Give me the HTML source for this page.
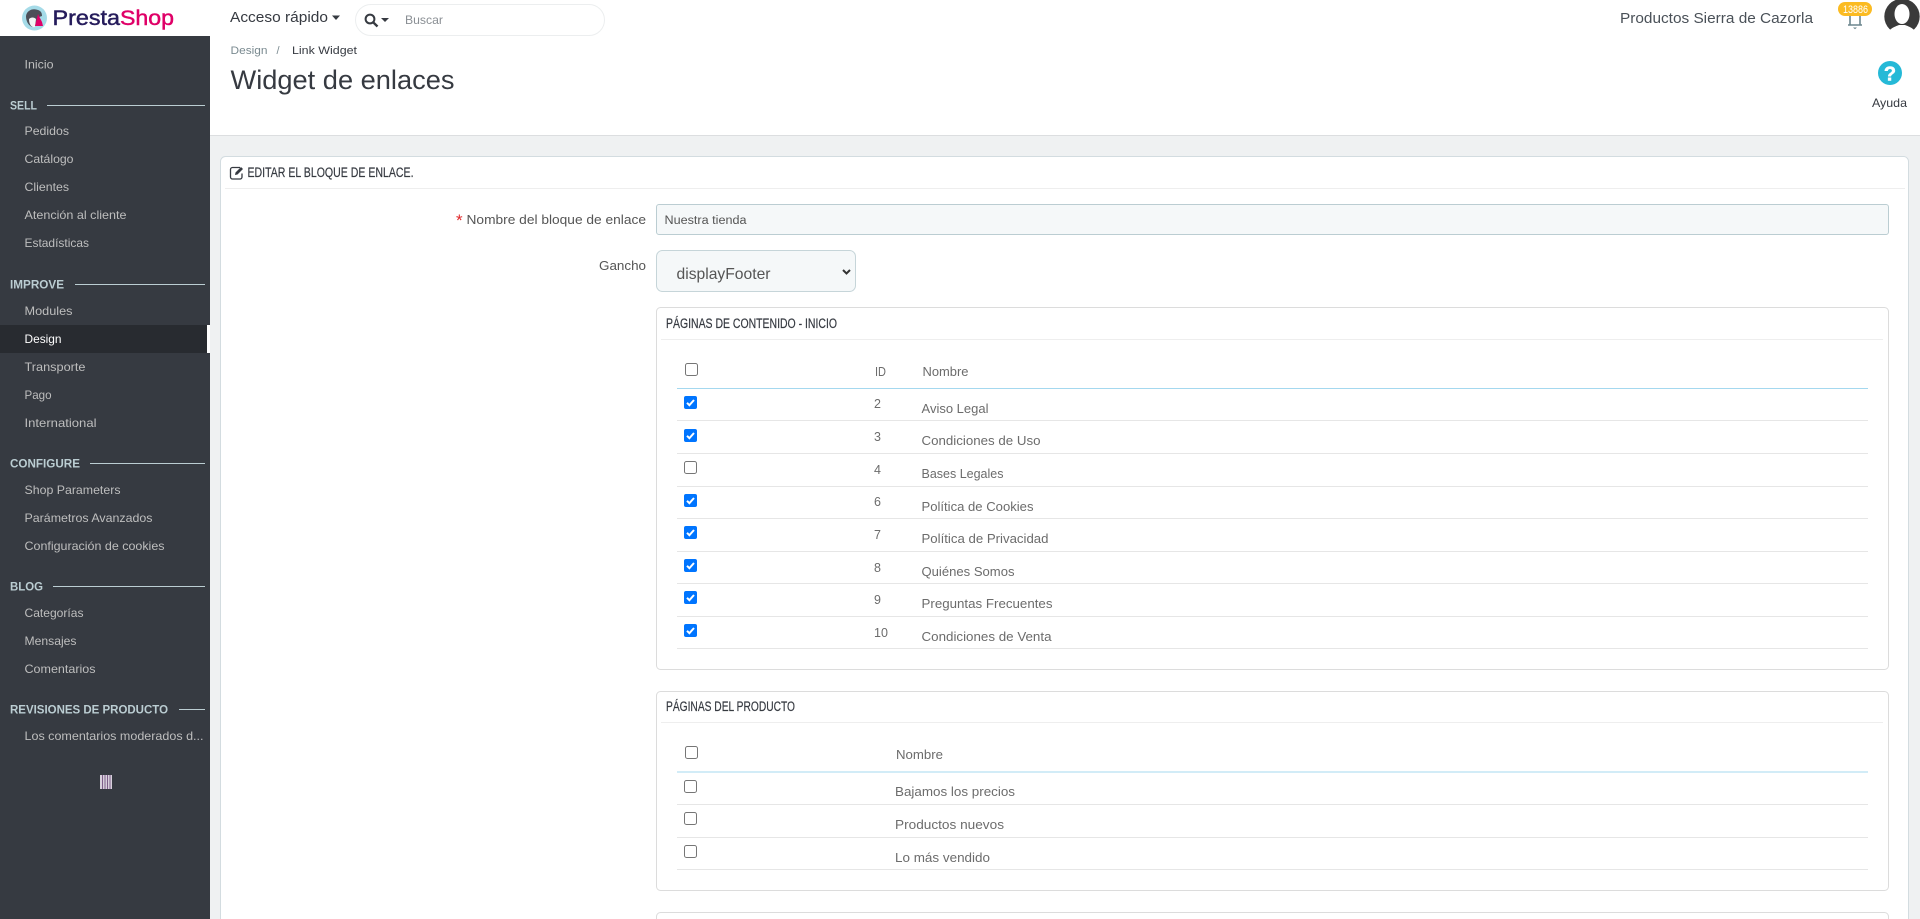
<!DOCTYPE html>
<html lang="es"><head><meta charset="utf-8"><title>Widget de enlaces</title>
<style>
html,body{margin:0;padding:0;background:#fff;overflow:hidden}
svg{display:block}
text{font-family:"Liberation Sans",sans-serif;white-space:pre}
.s{font-size:12px;fill:#bebebe}
.h{font-size:12px;font-weight:bold;fill:#bbcdd2}
.t{font-size:12.5px;fill:#6c6c6c}
.c{font-size:13.5px;fill:#363a41;stroke:#363a41;stroke-width:.2}
</style></head><body>
<svg xmlns="http://www.w3.org/2000/svg" width="1920" height="919" viewBox="0 0 1920 919">
<defs>
<g id="off"><rect x=".5" y=".5" width="12" height="12" rx="2" fill="#fff" stroke="#767676"/></g>
<g id="on"><rect width="13" height="13" rx="2" fill="#0075ff"/><path d="M3 6.800 5.400 9.200 10 4" fill="none" stroke="#fff" stroke-width="2"/></g>
</defs>
<rect width="1920" height="919" fill="#eff1f2"/>
<!-- header -->
<rect width="1920" height="135" fill="#fff"/>
<rect x="210" y="135" width="1710" height="1" fill="#dcdee0"/>
<!-- logo -->
<circle cx="34.500" cy="18" r="12.500" fill="#a5dbe8"/>
<path d="M26 16c1-6 7-8 12-6 3 1 4 3 4 6l-3 1-1 8-6 2c-4-2-6-6-6-11z" fill="#4d4f58"/>
<path d="M29 19c2-2 5-2 7 0l-1 8c-3 1-6-2-6-8z" fill="#f2f4f5"/>
<path d="M38 14l4 8 1 4h-8z" fill="#df0067"/>
<text x="52.500" y="25" font-size="21" fill="#251b5b" stroke="#251b5b" stroke-width=".45" textLength="67.500" lengthAdjust="spacingAndGlyphs">Presta</text>
<text x="120" y="25" font-size="21" fill="#df0067" stroke="#df0067" stroke-width=".45" textLength="54" lengthAdjust="spacingAndGlyphs">Shop</text>
<!-- quick access -->
<text x="230" y="22" font-size="14.500" fill="#363a41" textLength="98" lengthAdjust="spacingAndGlyphs">Acceso rápido</text>
<path d="M332 15.500h8l-4 4.500z" fill="#363a41"/>
<rect x="355.500" y="4.500" width="249" height="31" rx="15.500" fill="#fff" stroke="#eceeef"/>
<circle cx="370" cy="19" r="4.400" fill="none" stroke="#363a41" stroke-width="2"/>
<path d="M373.200 22.300 377.500 26.500" stroke="#363a41" stroke-width="2.400"/>
<path d="M381 18h8l-4 4z" fill="#363a41"/>
<text x="405" y="24" font-size="12" fill="#8a8f94" textLength="38" lengthAdjust="spacingAndGlyphs">Buscar</text>
<!-- top right -->
<text x="1620" y="23" font-size="15" fill="#4a5158" textLength="193" lengthAdjust="spacingAndGlyphs">Productos Sierra de Cazorla</text>
<path d="M1850 14v10.500M1860 14v10.500M1848 25h14" fill="none" stroke="#6c868e" stroke-width="1.600"/>
<path d="M1853 27.500h4l-2 1.800z" fill="#6c868e"/>
<rect x="1838" y="2" width="34" height="14" rx="7" fill="#fbbb22"/>
<text x="1843" y="13" font-size="11" fill="#fff" textLength="25" lengthAdjust="spacingAndGlyphs">13886</text>
<circle cx="1902" cy="16.500" r="17.700" fill="#3a3a3a"/>
<ellipse cx="1902" cy="14" rx="7.500" ry="10" fill="#fff"/>
<path d="M1887 36c1-7 7-9 12-11h6c5 2 11 4 12 11z" fill="#fff"/>
<rect x="1884" y="33" width="36" height="4" fill="#fff"/>
<circle cx="1890" cy="73" r="12" fill="#25b9d7"/>
<text x="1890" y="80.500" font-size="20" font-weight="bold" fill="#fff" stroke="#fff" stroke-width=".5" text-anchor="middle">?</text>
<text x="1872" y="107" font-size="12" fill="#363a41" textLength="35" lengthAdjust="spacingAndGlyphs">Ayuda</text>
<!-- breadcrumb & title -->
<text x="230.500" y="54" font-size="11" fill="#7a8a90" textLength="37" lengthAdjust="spacingAndGlyphs">Design</text>
<text x="276.500" y="54" font-size="11" fill="#7a8a90">/</text>
<text x="292" y="54" font-size="11" fill="#363a41" textLength="65" lengthAdjust="spacingAndGlyphs">Link Widget</text>
<text x="230.500" y="89" font-size="27" fill="#363a41" textLength="224" lengthAdjust="spacingAndGlyphs">Widget de enlaces</text>
<!-- sidebar -->
<rect y="36" width="210" height="883" fill="#363a41"/>
<rect y="325" width="210" height="28" fill="#282b30"/>
<rect x="207" y="325" width="3" height="28" fill="#fff"/>
<g class="s">
<text class="s" x="24.500" y="68.500" textLength="29" lengthAdjust="spacingAndGlyphs">Inicio</text>
<text class="s" x="24.500" y="135" textLength="44.500" lengthAdjust="spacingAndGlyphs">Pedidos</text>
<text class="s" x="24.500" y="163" textLength="49" lengthAdjust="spacingAndGlyphs">Catálogo</text>
<text class="s" x="24.500" y="191" textLength="44.500" lengthAdjust="spacingAndGlyphs">Clientes</text>
<text class="s" x="24.500" y="219" textLength="102" lengthAdjust="spacingAndGlyphs">Atención al cliente</text>
<text class="s" x="24.500" y="247" textLength="64.500" lengthAdjust="spacingAndGlyphs">Estadísticas</text>
<text class="s" x="24.500" y="315" textLength="48" lengthAdjust="spacingAndGlyphs">Modules</text>
<text class="s" x="24.500" y="343" textLength="37" lengthAdjust="spacingAndGlyphs" style="fill:#fff">Design</text>
<text class="s" x="24.500" y="371" textLength="61" lengthAdjust="spacingAndGlyphs">Transporte</text>
<text class="s" x="24.500" y="399" textLength="27" lengthAdjust="spacingAndGlyphs">Pago</text>
<text class="s" x="24.500" y="427" textLength="72" lengthAdjust="spacingAndGlyphs">International</text>
<text class="s" x="24.500" y="494" textLength="96" lengthAdjust="spacingAndGlyphs">Shop Parameters</text>
<text class="s" x="24.500" y="522" textLength="128" lengthAdjust="spacingAndGlyphs">Parámetros Avanzados</text>
<text class="s" x="24.500" y="550" textLength="140" lengthAdjust="spacingAndGlyphs">Configuración de cookies</text>
<text class="s" x="24.500" y="617" textLength="59" lengthAdjust="spacingAndGlyphs">Categorías</text>
<text class="s" x="24.500" y="645" textLength="52" lengthAdjust="spacingAndGlyphs">Mensajes</text>
<text class="s" x="24.500" y="673" textLength="71" lengthAdjust="spacingAndGlyphs">Comentarios</text>
<text class="s" x="24.500" y="740" textLength="179" lengthAdjust="spacingAndGlyphs">Los comentarios moderados d...</text>
</g>
<text class="h" x="10" y="109.500" textLength="27" lengthAdjust="spacingAndGlyphs">SELL</text>
<text class="h" x="10" y="288.500" textLength="54" lengthAdjust="spacingAndGlyphs">IMPROVE</text>
<text class="h" x="10" y="467.500" textLength="70" lengthAdjust="spacingAndGlyphs">CONFIGURE</text>
<text class="h" x="10" y="590.500" textLength="33" lengthAdjust="spacingAndGlyphs">BLOG</text>
<text class="h" x="10" y="713.500" textLength="158" lengthAdjust="spacingAndGlyphs">REVISIONES DE PRODUCTO</text>
<g fill="#bbcdd2">
<rect x="47" y="105" width="158" height="1"/>
<rect x="75" y="284" width="130" height="1"/>
<rect x="90" y="463" width="115" height="1"/>
<rect x="53" y="586" width="152" height="1"/>
<rect x="179" y="709" width="26" height="1"/>
</g>
<g>
<rect x="100" y="775" width="12" height="14" fill="#d8d0dc"/>
<rect x="102" y="775" width="1" height="14" fill="#7d5f88"/>
<rect x="104.500" y="775" width="1" height="14" fill="#7d5f88"/>
<rect x="107" y="775" width="1" height="14" fill="#7d5f88"/>
<rect x="109.500" y="775" width="1" height="14" fill="#7d5f88"/>
</g>
<!-- main card -->
<rect x="220.500" y="156.500" width="1688" height="790" rx="5" fill="#fff" stroke="#d3dce0"/>
<g fill="none" stroke="#363a41" stroke-width="1.300">
<path d="M240 167.500h-7.500a2 2 0 0 0-2 2v7.500a2 2 0 0 0 2 2h7.500a2 2 0 0 0 2-2v-3.500"/>
</g>
<path d="M235.500 172.500 241 167l2 2-5.500 5.500-2.500.5z" fill="#363a41"/>
<text class="c" x="247.500" y="177" textLength="166" lengthAdjust="spacingAndGlyphs">EDITAR EL BLOQUE DE ENLACE.</text>
<rect x="225" y="188" width="1680" height="1" fill="#eeeeee"/>
<!-- form -->
<text x="456" y="226" font-size="17" fill="#e0272a">*</text>
<text class="t" x="466.500" y="224" textLength="179.500" lengthAdjust="spacingAndGlyphs" style="fill:#555">Nombre del bloque de enlace</text>
<rect x="656.500" y="204.500" width="1232" height="30" rx="2.500" fill="#f5f8f9" stroke="#bbcdd2"/>
<text x="664.500" y="224" font-size="11.500" fill="#555" textLength="82" lengthAdjust="spacingAndGlyphs">Nuestra tienda</text>
<text class="t" x="599" y="270" textLength="47" lengthAdjust="spacingAndGlyphs" style="fill:#555">Gancho</text>
<rect x="656.500" y="250.500" width="199" height="41" rx="6" fill="#f5f8f9" stroke="#c6d5d9"/>
<text x="676.500" y="279" font-size="16" fill="#555" textLength="94" lengthAdjust="spacingAndGlyphs">displayFooter</text>
<path d="M843 270 846.500 273.500 850 270" fill="none" stroke="#333" stroke-width="2"/>
<!-- panel 1 -->
<rect x="656.500" y="307.500" width="1232" height="362" rx="4" fill="#fff" stroke="#dcdcdc"/>
<text class="c" x="666" y="328" textLength="171" lengthAdjust="spacingAndGlyphs">PÁGINAS DE CONTENIDO - INICIO</text>
<rect x="661" y="339" width="1222" height="1" fill="#eeeeee"/>
<use href="#off" x="685" y="363"/>
<text class="t" x="875" y="376" textLength="11" lengthAdjust="spacingAndGlyphs">ID</text>
<text class="t" x="922.500" y="376" textLength="46" lengthAdjust="spacingAndGlyphs">Nombre</text>
<rect x="677" y="388" width="1191" height="1" fill="#a4d8ef"/>
<g fill="#e6e6e6">
<rect x="677" y="420" width="1191" height="1"/><rect x="677" y="453" width="1191" height="1"/>
<rect x="677" y="486" width="1191" height="1"/><rect x="677" y="518" width="1191" height="1"/>
<rect x="677" y="551" width="1191" height="1"/><rect x="677" y="583" width="1191" height="1"/>
<rect x="677" y="616" width="1191" height="1"/><rect x="677" y="648" width="1191" height="1"/>
</g>
<use href="#on" x="684" y="396"/><use href="#on" x="684" y="429"/><use href="#off" x="684" y="461"/>
<use href="#on" x="684" y="494"/><use href="#on" x="684" y="526"/><use href="#on" x="684" y="559"/>
<use href="#on" x="684" y="591"/><use href="#on" x="684" y="624"/>
<text class="t" x="874" y="408">2</text><text class="t" x="874" y="441">3</text><text class="t" x="874" y="474">4</text>
<text class="t" x="874" y="506">6</text><text class="t" x="874" y="539">7</text><text class="t" x="874" y="572">8</text>
<text class="t" x="874" y="604">9</text><text class="t" x="874" y="637">10</text>
<text class="t" x="921.500" y="413" textLength="67" lengthAdjust="spacingAndGlyphs">Aviso Legal</text>
<text class="t" x="921.500" y="445" textLength="119" lengthAdjust="spacingAndGlyphs">Condiciones de Uso</text>
<text class="t" x="921.500" y="478" textLength="82" lengthAdjust="spacingAndGlyphs">Bases Legales</text>
<text class="t" x="921.500" y="511" textLength="112" lengthAdjust="spacingAndGlyphs">Política de Cookies</text>
<text class="t" x="921.500" y="543" textLength="127" lengthAdjust="spacingAndGlyphs">Política de Privacidad</text>
<text class="t" x="921.500" y="576" textLength="93" lengthAdjust="spacingAndGlyphs">Quiénes Somos</text>
<text class="t" x="921.500" y="608" textLength="131" lengthAdjust="spacingAndGlyphs">Preguntas Frecuentes</text>
<text class="t" x="921.500" y="641" textLength="130" lengthAdjust="spacingAndGlyphs">Condiciones de Venta</text>
<!-- panel 2 -->
<rect x="656.500" y="691.500" width="1232" height="199" rx="4" fill="#fff" stroke="#dcdcdc"/>
<text class="c" x="666" y="711" textLength="129" lengthAdjust="spacingAndGlyphs">PÁGINAS DEL PRODUCTO</text>
<rect x="661" y="722" width="1222" height="1" fill="#eeeeee"/>
<use href="#off" x="685" y="746"/>
<text class="t" x="896" y="759" textLength="47" lengthAdjust="spacingAndGlyphs">Nombre</text>
<rect x="677" y="771.500" width="1191" height="1" fill="#a4d8ef"/>
<g fill="#e6e6e6">
<rect x="677" y="804" width="1191" height="1"/><rect x="677" y="837" width="1191" height="1"/><rect x="677" y="869" width="1191" height="1"/>
</g>
<use href="#off" x="684" y="780"/><use href="#off" x="684" y="812"/><use href="#off" x="684" y="845"/>
<text class="t" x="895" y="796" textLength="120" lengthAdjust="spacingAndGlyphs">Bajamos los precios</text>
<text class="t" x="895" y="829" textLength="109" lengthAdjust="spacingAndGlyphs">Productos nuevos</text>
<text class="t" x="895" y="862" textLength="95" lengthAdjust="spacingAndGlyphs">Lo más vendido</text>
<!-- panel 3 -->
<rect x="656.500" y="912.500" width="1232" height="40" rx="4" fill="#fff" stroke="#dcdcdc"/>
</svg>
</body></html>
